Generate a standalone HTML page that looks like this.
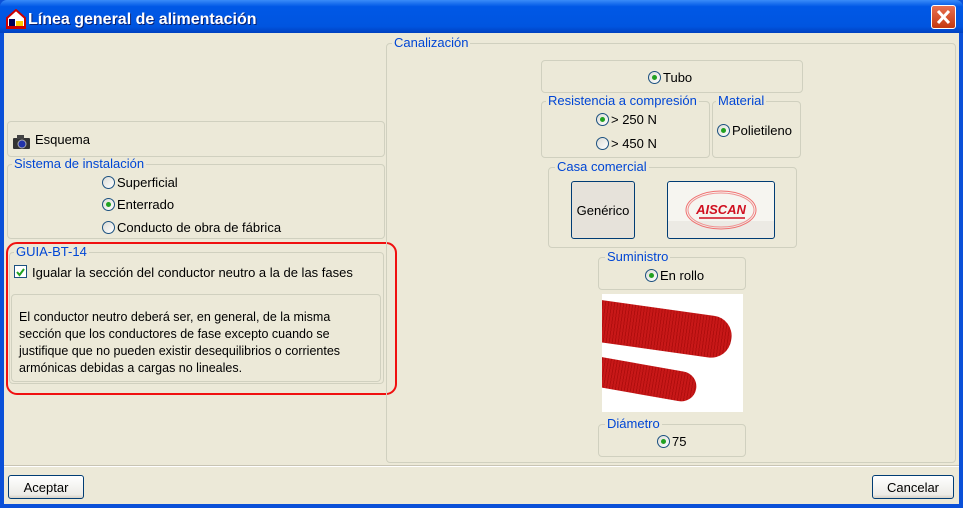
<!DOCTYPE html><html><head><meta charset="utf-8"><style>
*{margin:0;padding:0;box-sizing:border-box}
body{width:963px;height:508px;overflow:hidden;background:#0A50D8;font-family:"Liberation Sans",sans-serif;font-size:13px;color:#000;position:relative}
.title{position:absolute;left:0;top:0;width:963px;height:33px;background:linear-gradient(#3A8CF8,#0058E6 20%,#0055E0 80%,#0040C0);border-radius:7px 7px 0 0}
.title span{position:absolute;left:28px;top:11px;color:#fff;font-weight:bold;font-size:16px;text-shadow:1px 1px #0A2070}
.client{position:absolute;left:4px;top:33px;width:955px;height:471px;background:#ECE9D8}
.a{position:absolute}
.g{position:absolute;border:1px solid #D0D0BF;border-radius:4px}
.lg{position:absolute;background:#ECE9D8;color:#0046D5;padding:0 2px;top:-8px;left:5px;font-size:13px;line-height:14px}
.r{position:absolute;display:flex;align-items:center;white-space:nowrap}
.rb{width:13px;height:13px;border-radius:50%;border:1px solid #1C5180;background:linear-gradient(135deg,#DCDCD6,#fff);margin-right:2px;position:relative}
.rb.on::after{content:"";position:absolute;left:3px;top:3px;width:5px;height:5px;border-radius:50%;background:#21A121}
.btn{position:absolute;border:1px solid #003C74;border-radius:3px;background:linear-gradient(#fff,#ECEBE6 85%,#D6D0C5);display:flex;align-items:center;justify-content:center}
</style></head><body>
<div class="title"><svg class="a" style="left:6px;top:9px" width="20" height="20"><path d="M1 9L10 1L19 9V19H1Z" fill="#fff" stroke="#C00" stroke-width="2"/><rect x="3" y="10" width="6" height="8" fill="#005"/><rect x="10" y="12" width="7" height="6" fill="#FC0"/><rect x="2" y="17" width="16" height="2" fill="#C00"/></svg><span>Línea general de alimentación</span></div>
<div class="a" style="left:931px;top:5px;width:25px;height:24px;border:1px solid #fff;border-radius:3px;background:linear-gradient(#E87050,#C43810)"><svg width="23" height="22"><path d="M6 5L17 17M17 5L6 17" stroke="#fff" stroke-width="3"/></svg></div>
<div class="client">
<div class="g" style="left:3px;top:88px;width:378px;height:36px"></div>
<svg class="a" style="left:9px;top:102px" width="17" height="14"><rect x="0" y="3" width="17" height="11" rx="1" fill="#333"/><rect x="4" y="0" width="7" height="4" fill="#444"/><circle cx="9" cy="9" r="4" fill="#2233AA" stroke="#aaa"/></svg>
<div class="a" style="left:31px;top:99px">Esquema</div>
<div class="g" style="left:3px;top:131px;width:378px;height:75px"><span class="lg" style="left:4px">Sistema de instalación</span></div>
<div class="r" style="left:98px;top:142px"><span class="rb"></span>Superficial</div>
<div class="r" style="left:98px;top:164px"><span class="rb on"></span>Enterrado</div>
<div class="r" style="left:98px;top:187px"><span class="rb"></span>Conducto de obra de fábrica</div>
<div class="a" style="left:2px;top:209px;width:391px;height:153px;border:2px solid #F01010;border-radius:11px"></div>
<div class="g" style="left:5px;top:219px;width:375px;height:132px"><span class="lg" style="left:4px">GUIA-BT-14</span></div>
<div class="a" style="left:10px;top:232px;width:13px;height:13px;border:1px solid #1C5180;background:#fff"><svg width="11" height="11"><path d="M2 5L4.5 8L9 2" stroke="#21A121" stroke-width="2" fill="none"/></svg></div>
<div class="a" style="left:28px;top:232px">Igualar la sección del conductor neutro a la de las fases</div>
<div class="g" style="left:7px;top:261px;width:370px;height:88px"></div>
<div class="a" style="left:15px;top:276px;width:355px;font-size:12.5px;line-height:17px">El conductor neutro deberá ser, en general, de la misma sección que los conductores de fase excepto cuando se justifique que no pueden existir desequilibrios o corrientes armónicas debidas a cargas no lineales.</div>
<div class="g" style="left:382px;top:10px;width:570px;height:420px"><span class="lg">Canalización</span></div>
<div class="g" style="left:537px;top:27px;width:262px;height:33px"></div>
<div class="r" style="left:644px;top:37px"><span class="rb on"></span>Tubo</div>
<div class="g" style="left:537px;top:68px;width:169px;height:57px"><span class="lg" style="left:4px">Resistencia a compresión</span></div>
<div class="r" style="left:592px;top:79px"><span class="rb on"></span>&gt; 250 N</div>
<div class="r" style="left:592px;top:103px"><span class="rb"></span>&gt; 450 N</div>
<div class="g" style="left:708px;top:68px;width:89px;height:57px"><span class="lg" style="left:3px">Material</span></div>
<div class="r" style="left:713px;top:90px"><span class="rb on"></span>Polietileno</div>
<div class="g" style="left:544px;top:134px;width:249px;height:81px"><span class="lg" style="left:6px">Casa comercial</span></div>
<div class="btn" style="left:567px;top:148px;width:64px;height:58px;background:#E6E2DA">Genérico</div>
<div class="btn" style="left:663px;top:148px;width:108px;height:58px;background:linear-gradient(#F6F5F0 70%,#ECEAE4 70%)"><svg width="76" height="44"><ellipse cx="38" cy="22" rx="35" ry="19" fill="none" stroke="#F07070"/><ellipse cx="38" cy="22" rx="33" ry="17" fill="none" stroke="#F09090"/><text x="38" y="26" text-anchor="middle" font-family="Liberation Sans" font-style="italic" font-weight="bold" font-size="13" fill="#D01020">AISCAN</text><path d="M16 30H62" stroke="#D01020" stroke-width="1.5"/></svg></div>
<div class="g" style="left:594px;top:224px;width:148px;height:33px"><span class="lg" style="left:6px">Suministro</span></div>
<div class="r" style="left:641px;top:235px"><span class="rb on"></span>En rollo</div>
<div class="a" style="left:598px;top:261px;width:141px;height:118px;background:#fff;overflow:hidden">
<div class="a" style="left:-20px;top:14px;width:150px;height:42px;background:repeating-linear-gradient(90deg,#C81818 0 2px,#B00E0E 2px 3px);border-radius:0 20px 20px 0;transform:rotate(8deg)"></div>
<div class="a" style="left:-20px;top:70px;width:115px;height:30px;background:repeating-linear-gradient(90deg,#C81818 0 2px,#B00E0E 2px 3px);border-radius:0 15px 15px 0;transform:rotate(10deg)"></div></div>
<div class="g" style="left:594px;top:391px;width:148px;height:33px"><span class="lg" style="left:6px">Diámetro</span></div>
<div class="r" style="left:653px;top:401px"><span class="rb on"></span>75</div>
<div class="a" style="left:0;top:432px;width:955px;border-top:1px solid #C8C4B4;border-bottom:1px solid #fff"></div>
<div class="btn" style="left:4px;top:442px;width:76px;height:24px">Aceptar</div>
<div class="btn" style="left:868px;top:442px;width:82px;height:24px">Cancelar</div>
</div>
</body></html>
